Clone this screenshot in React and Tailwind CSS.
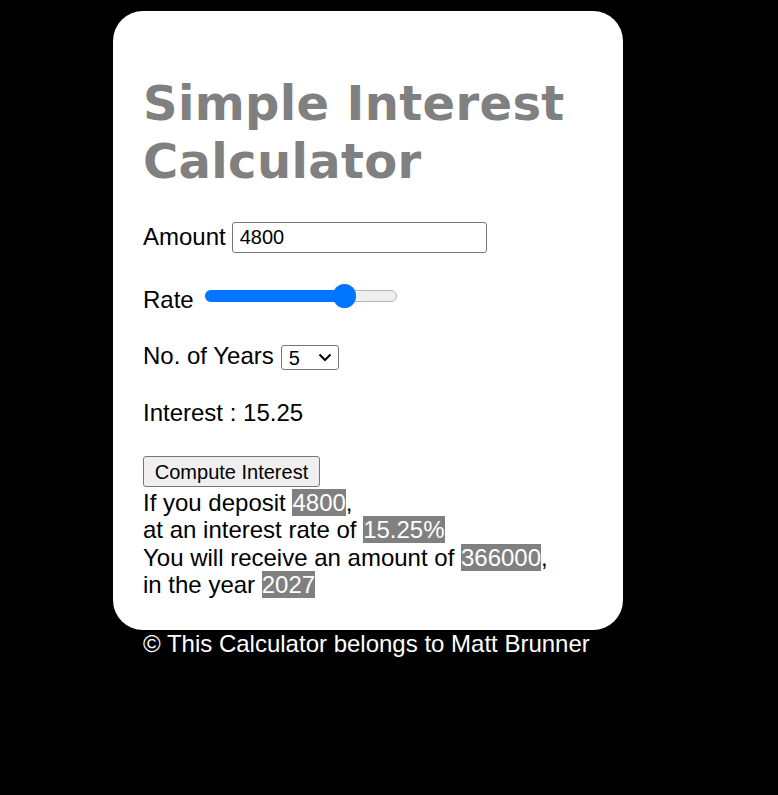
import React from 'react';

const Hl = ({ children }) => <span className="bg-[#808080] text-white">{children}</span>;

const App = () => {
  return (
    <div className="min-h-[795px] bg-black pt-[11px] font-['Liberation_Sans',Arial,sans-serif] text-[24px] text-black">
      {/* Card */}
      <div className="ml-[113px] w-[510px] rounded-[30px] bg-white px-[30px] pt-[30px] pb-[31px]">
        <h1 className="mt-[33px] mb-[31px] font-['DejaVu_Sans',Verdana,sans-serif] text-[48px] font-bold leading-[58px] tracking-[0.35px] text-[#808080]">
          Simple Interest Calculator
        </h1>

        {/* Amount */}
        <div className="flex h-[32px] items-center">
          <span className="leading-[28px]">Amount</span>
          <div className="ml-[6px] flex h-[31px] w-[255px] items-center rounded-[3px] border border-[#767676] px-[7px] text-[20px]">
            4800
          </div>
        </div>

        {/* Rate */}
        <div className="mt-[31px] flex items-end">
          <span className="leading-[28px]">Rate</span>
          <div className="relative mb-[6px] ml-[11px] h-[24px] w-[192px]">
            <div className="absolute top-[6px] left-0 h-[12px] w-full rounded-full border border-[#b5b5b5] bg-[#efefef]" />
            <div className="absolute top-[6px] left-0 h-[12px] w-[145px] rounded-full bg-[#0075ff]" />
            <div className="absolute top-0 left-[128px] h-[24px] w-[23px] rounded-full bg-[#0075ff]" />
          </div>
        </div>

        {/* Years */}
        <div className="mt-[28px] flex items-end">
          <span className="leading-[28px]">No. of Years</span>
          <div className="ml-[7px] flex h-[25px] w-[58px] items-center justify-between rounded-[3px] border border-[#767676] pr-[6px] pl-[7px] text-[20px] leading-none">
            <span>5</span>
            <svg width="14" height="9" viewBox="0 0 14 9" fill="none">
              <path d="M1.5 1.5 L7 7 L12.5 1.5" stroke="#000" strokeWidth="2" />
            </svg>
          </div>
        </div>

        <div className="mt-[29px] leading-[28px]">Interest : 15.25</div>

        <button
          type="button"
          className="mt-[29px] h-[31px] w-[177px] rounded-[3px] border border-[#767676] bg-[#efefef] text-[20px] leading-none"
        >
          Compute Interest
        </button>

        <div className="leading-[27.6px]">
          <div>If you deposit <Hl>4800</Hl>,</div>
          <div>at an interest rate of <Hl>15.25%</Hl></div>
          <div>You will receive an amount of <Hl>366000</Hl>,</div>
          <div>in the year <Hl>2027</Hl></div>
        </div>
      </div>

      <div className="ml-[143px] leading-[27.6px] text-white">© This Calculator belongs to Matt Brunner</div>
    </div>
  );
};

export default App;
